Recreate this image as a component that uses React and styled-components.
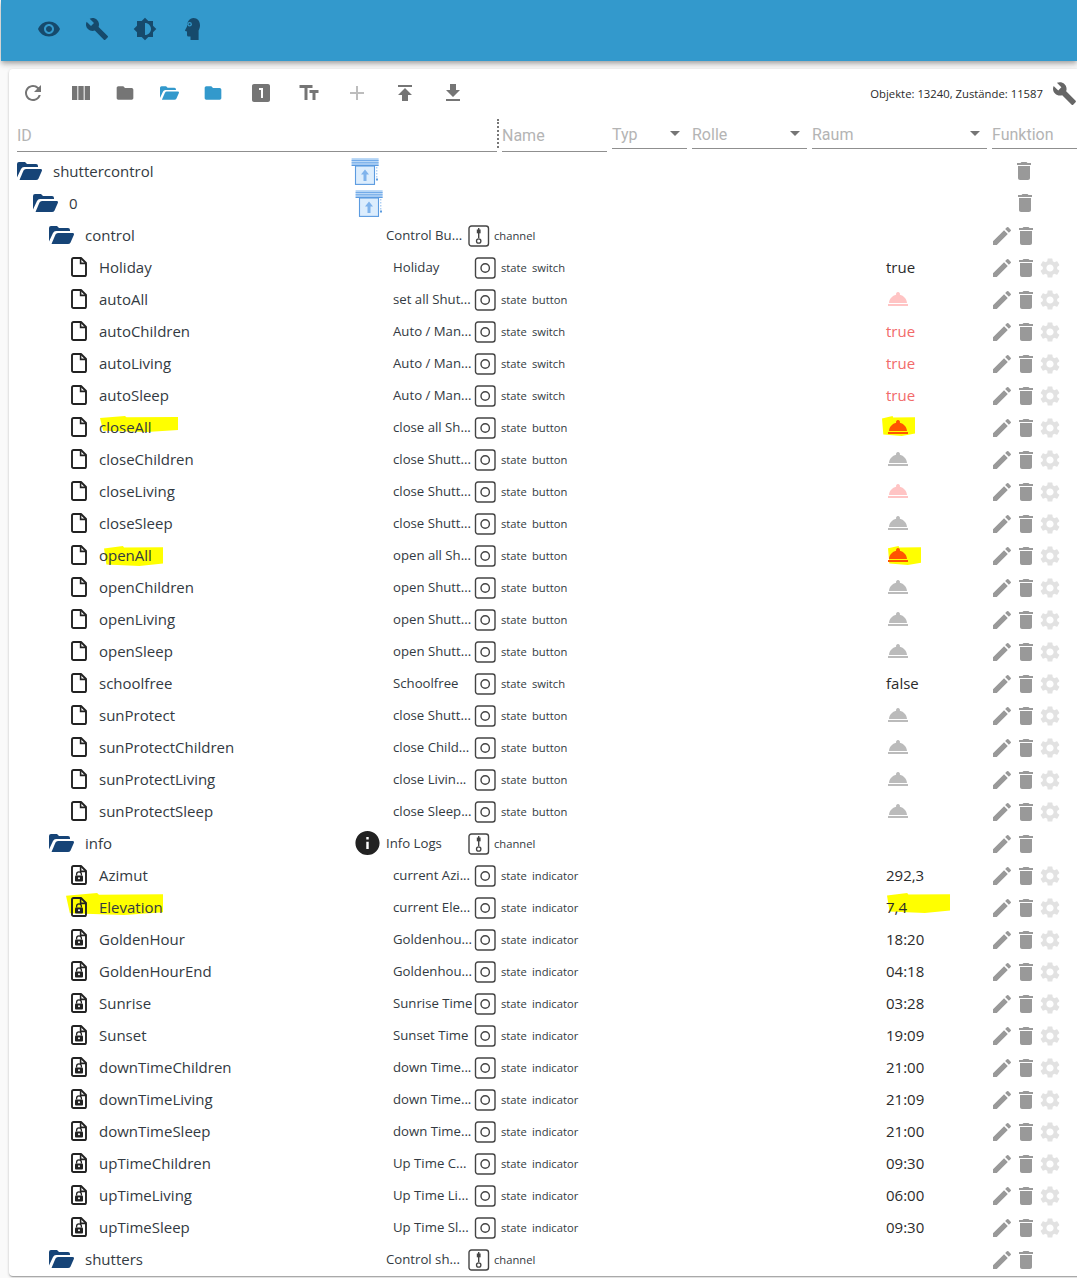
import React from 'react';
import styled, { createGlobalStyle } from 'styled-components';
import {
  MdRefresh, MdViewColumn, MdFolder, MdLooksOne, MdTextFields, MdAdd, MdPublish, MdGetApp,
  MdBuild, MdVisibility, MdBrightness6, MdEdit, MdDelete, MdSettings, MdRoomService, MdInfo,
} from 'react-icons/md';

const Global = createGlobalStyle`
  html, body { margin: 0; padding: 0; background: #fafafa; overflow: hidden; }
  body { width: 1077px; height: 1278px; font-family: "Open Sans", "Noto Sans", sans-serif; }
`;

const Page = styled.div`
  width: 1077px;
  height: 1278px;
  overflow: hidden;
  position: relative;
`;

const AppBar = styled.header`
  margin-left: 1px;
  height: 61px;
  background: #3399cc;
  box-shadow: 0 2px 4px -1px rgba(0,0,0,.2), 0 4px 5px 0 rgba(0,0,0,.14), 0 1px 10px 0 rgba(0,0,0,.12);
  display: flex;
  align-items: center;
  padding-left: 24px;
  padding-bottom: 3px;
  box-sizing: border-box;
  color: #164a6c;
`;

const AppIcon = styled.span`
  width: 48px;
  height: 48px;
  display: flex;
  align-items: center;
  justify-content: center;
  font-size: 24px;
`;

const Paper = styled.main`
  margin: 8px 0 0 9px;
  width: 1100px;
  height: 1207px;
  background: #fff;
  border-radius: 4px;
  box-shadow: 0 1px 3px 0 rgba(0,0,0,.2), 0 1px 1px 0 rgba(0,0,0,.14), 0 2px 1px -1px rgba(0,0,0,.12);
  overflow: hidden;
  position: relative;
`;

const Toolbar = styled.div`
  display: flex;
  align-items: center;
  height: 48px;
  width: 1068px;
  box-sizing: border-box;
`;

const ToolIcon = styled.span`
  width: ${p => p.$w || 48}px;
  height: 48px;
  flex: none;
  margin-left: ${p => p.$ml || 0}px;
  display: flex;
  align-items: center;
  justify-content: center;
  font-size: ${p => p.$size || 24}px;
  color: ${p => p.$color || '#757575'};
`;

const ToolGroup = styled.div`
  display: flex;
`;

const Stats = styled.div`
  margin-left: auto;
  font-size: 11.3px;
  color: #2a2a2a;
  white-space: nowrap;
`;

const WrenchSlot = styled.span`
  width: 34px;
  flex: none;
  display: flex;
  justify-content: flex-end;
  font-size: 25px;
  color: #666;
`;

const FilterBar = styled.div`
  display: flex;
  padding-left: 8px;
  height: 38px;
  box-sizing: border-box;
  margin-top: 2px;
  font-family: Roboto, sans-serif;
`;

const Filter = styled.div`
  width: ${p => p.$w}px;
  height: ${p => p.$h}px;
  flex: none;
  margin-right: ${p => p.$mr ?? 5}px;
  border-bottom: 1px solid #8f8f8f;
  box-sizing: border-box;
  display: flex;
  align-items: center;
  justify-content: space-between;
  color: #b4b4b4;
  font-size: 16px;
  padding-top: ${p => p.$pt || 0}px;
`;

const Arrow = styled.i`
  width: 0;
  height: 0;
  border-left: 5px solid transparent;
  border-right: 5px solid transparent;
  border-top: 5px solid #757575;
  margin: 0 7px 2px 0;
`;

const Resizer = styled.div`
  width: 0;
  height: 29px;
  flex: none;
  margin-right: 3px;
  border-left: 2px dotted #777;
`;

const Rows = styled.div`
  display: flex;
  flex-direction: column;
  margin-top: -2px;
`;

const PAD = [8, 24, 40, 62];
const IDW = [334, 322, 337, 321];
const TYPEW = [453, 449, 418, 412];
const VALW = [102, 103, 104, 104];

const Row = styled.div`
  display: flex;
  align-items: center;
  height: 32px;
  flex: none;
  padding-left: ${p => PAD[p.$level]}px;
  position: relative;
  color: #333a42;
`;

const IdCell = styled.div`
  width: ${p => IDW[p.$level]}px;
  flex: none;
  display: flex;
  align-items: center;
  font-size: 15px;
  position: relative;
  z-index: 1;
`;

const IdIcon = styled.span`
  width: ${p => p.$w}px;
  flex: none;
  display: flex;
  align-items: center;
`;

const NameCell = styled.div`
  width: 82px;
  flex: none;
  font-size: 13.2px;
  white-space: nowrap;
  padding-bottom: 1px;
  padding-left: ${p => p.$level === 3 ? 1 : 0}px;
  box-sizing: border-box;
  display: flex;
`;

const TypeCell = styled.div`
  width: ${p => TYPEW[p.$level]}px;
  flex: none;
  display: flex;
  align-items: center;
  font-size: 11.2px;
  white-space: nowrap;
  padding-top: 2px;
  box-sizing: border-box;
`;

const TypeName = styled.span`
  margin-left: ${p => p.$ml}px;
  width: ${p => p.$w ? p.$w + 'px' : 'auto'};
  margin-top: -2px;
`;

const ValueCell = styled.div`
  width: ${p => VALW[p.$level]}px;
  flex: none;
  font-size: 15px;
  color: ${p => p.$color || '#2b2b2b'};
  display: flex;
  align-items: center;
  position: relative;
  z-index: 1;
`;

const Actions = styled.div`
  display: flex;
  flex: none;
  padding-top: ${p => p.$level < 2 ? 0 : 2}px;
`;

const ActionIcon = styled.span`
  width: 24px;
  height: 24px;
  display: flex;
  font-size: 24px;
  color: ${p => p.$color || '#999'};
  visibility: ${p => p.$hidden ? 'hidden' : 'visible'};
`;

const Marker = styled.span`
  position: absolute;
  left: ${p => p.$x}px;
  top: ${p => p.$y}px;
  width: ${p => p.$w}px;
  height: ${p => p.$h}px;
  background: #ffff00;
  clip-path: polygon(0 12%, 32% 0, 34% 8%, 100% 6%, 100% 88%, 60% 100%, 4% 92%);
`;

const FolderOpenIcon = ({ w = 25, h = 18, color = '#164477' }) => (
  <svg width={w} height={h} viewBox="0 0 25 18" fill={color}>
    <path d="M0 15.5V2Q0 0 2 0H8L10 2H19Q21 2 21 4V5H7Q5 5 4 7Z" />
    <path d="M2.5 18L6.5 8.6Q7.2 7 9 7H23.5Q25.5 7 24.8 9L21.5 16.5Q20.8 18 19 18Z" />
  </svg>
);

const FileIcon = ({ locked }) => (
  <svg width="16" height="20" viewBox="0 0 16 20">
    <path d="M2.6 1H10L15 6V17.4Q15 19 13.4 19H2.6Q1 19 1 17.4V2.6Q1 1 2.6 1Z" fill="none" stroke="#222" strokeWidth="1.9" strokeLinejoin="round" />
    <path d="M9.6 1V6.4H15" fill="none" stroke="#222" strokeWidth="1.6" />
    {locked && (
      <g>
        <rect x="4" y="10.4" width="8" height="6" rx="1" fill="#222" />
        <path d="M5.6 10.6V9.2A2.4 2.4 0 0 1 10.4 9.2V10.6" fill="none" stroke="#222" strokeWidth="1.3" />
        <circle cx="8" cy="13.3" r="1" fill="#fff" />
      </g>
    )}
  </svg>
);

const StateIcon = () => (
  <svg width="22" height="22" viewBox="0 0 22 22">
    <rect x="1.5" y="1" width="19.5" height="20" rx="2.5" fill="none" stroke="#444" strokeWidth="1.4" />
    <circle cx="11.2" cy="11" r="4.2" fill="none" stroke="#444" strokeWidth="1.4" />
  </svg>
);

const ChannelIcon = () => (
  <svg width="22" height="22" viewBox="0 0 22 22">
    <rect x="1" y="1" width="19.5" height="20" rx="2.5" fill="none" stroke="#444" strokeWidth="1.4" />
    <path d="M10.7 3V13" stroke="#444" strokeWidth="1.4" />
    <rect x="8.8" y="4.5" width="3.8" height="3.8" fill="#444" />
    <circle cx="10.7" cy="16" r="2.2" fill="none" stroke="#444" strokeWidth="1.3" />
  </svg>
);

const ShutterIcon = () => (
  <svg width="28" height="28" viewBox="0 0 28 28">
    <rect x="4.5" y="9" width="19" height="18.4" fill="#dcedfd" stroke="#5b9be0" strokeWidth="1.1" />
    <rect x="0.6" y="1" width="27" height="7.6" fill="#bcd9f7" />
    <path d="M0.6 3.4H27.6M0.6 5.8H27.6" stroke="#6aa5e6" strokeWidth="1" />
    <path d="M0.6 8.4H27.6" stroke="#5b9be0" strokeWidth="1.2" />
    <path d="M14 12.5L18 17.5H15.5V24H12.5V17.5H10Z" fill="#7fb3ec" />
    <path d="M25.8 10V21" stroke="#8dbcf0" strokeWidth="1" strokeDasharray="1.5 1.5" />
    <rect x="25" y="21.5" width="2" height="2" fill="#5b9be0" />
  </svg>
);

const HeadIcon = () => (
  <svg width="24" height="24" viewBox="0 0 24 24">
    <path d="M12.5 1C16.5 1 19 4.2 19 8.2C19 10.6 18.2 12.2 17.6 13.6V23H9.5V19.5H7.6Q6 19.5 6 17.9V14.6L4.3 14Q3.8 13.6 4.2 13L6 9.6C6 4.8 8.5 1 12.5 1Z" fill="#164a6c" />
    <circle cx="8.6" cy="7.2" r="2.3" fill="#3399cc" />
    <circle cx="8.6" cy="7.2" r="1" fill="#164a6c" />
  </svg>
);

const BELL = { pink: '#ffc4c4', gray: '#bbbbbb', hot: '#ff5500' };

const ctl = (id, name, role, value, color) => ({ id, name, role, value, color, level: 3 });
const inf = (id, name, value) => ({ id, name, role: 'indicator', value, level: 3, locked: true });
const bell = tone => ({ bell: tone });

const rows = [
  { level: 0, id: 'shuttercontrol', folder: true, shutter: true },
  { level: 1, id: '0', folder: true, shutter: true },
  { level: 2, id: 'control', folder: true, name: 'Control Bu...' },
  ctl('Holiday', 'Holiday', 'switch', 'true'),
  ctl('autoAll', 'set all Shut...', 'button', bell('pink')),
  ctl('autoChildren', 'Auto / Man...', 'switch', 'true', '#f26a6a'),
  ctl('autoLiving', 'Auto / Man...', 'switch', 'true', '#f26a6a'),
  ctl('autoSleep', 'Auto / Man...', 'switch', 'true', '#f26a6a'),
  { ...ctl('closeAll', 'close all Sh...', 'button', bell('hot')), marks: [[91, 5, 78, 16], [873, 5, 33, 20]] },
  ctl('closeChildren', 'close Shutt...', 'button', bell('gray')),
  ctl('closeLiving', 'close Shutt...', 'button', bell('pink')),
  ctl('closeSleep', 'close Shutt...', 'button', bell('gray')),
  { ...ctl('openAll', 'open all Sh...', 'button', bell('hot')), marks: [[95, 7, 59, 20], [879, 7, 33, 19]] },
  ctl('openChildren', 'open Shutt...', 'button', bell('gray')),
  ctl('openLiving', 'open Shutt...', 'button', bell('gray')),
  ctl('openSleep', 'open Shutt...', 'button', bell('gray')),
  ctl('schoolfree', 'Schoolfree', 'switch', 'false'),
  ctl('sunProtect', 'close Shutt...', 'button', bell('gray')),
  ctl('sunProtectChildren', 'close Child...', 'button', bell('gray')),
  ctl('sunProtectLiving', 'close Livin...', 'button', bell('gray')),
  ctl('sunProtectSleep', 'close Sleep...', 'button', bell('gray')),
  { level: 2, id: 'info', folder: true, name: 'Info Logs', info: true },
  inf('Azimut', 'current Azi...', '292,3'),
  { ...inf('Elevation', 'current Ele...', '7,4'), marks: [[57, 2, 97, 22], [878, 2, 63, 20]] },
  inf('GoldenHour', 'Goldenhou...', '18:20'),
  inf('GoldenHourEnd', 'Goldenhou...', '04:18'),
  inf('Sunrise', 'Sunrise Time', '03:28'),
  inf('Sunset', 'Sunset Time', '19:09'),
  inf('downTimeChildren', 'down Time...', '21:00'),
  inf('downTimeLiving', 'down Time...', '21:09'),
  inf('downTimeSleep', 'down Time...', '21:00'),
  inf('upTimeChildren', 'Up Time C...', '09:30'),
  inf('upTimeLiving', 'Up Time Li...', '06:00'),
  inf('upTimeSleep', 'Up Time Sl...', '09:30'),
  { level: 2, id: 'shutters', folder: true, name: 'Control sh...' },
];

const InfoMark = styled.span`
  position: absolute;
  left: -33px;
  top: 50%;
  transform: translateY(-50%);
  display: flex;
  font-size: 29px;
  color: #222;
`;

const NameWrap = styled.div`
  position: relative;
  display: flex;
`;

const TreeRow = ({ r }) => (
  <Row $level={r.level}>
    {r.marks && r.marks.map((m, i) => (
      <Marker key={i} $x={m[0]} $y={m[1]} $w={m[2]} $h={m[3]} />
    ))}
    <IdCell $level={r.level}>
      {r.folder ? (
        <IdIcon $w={36}><FolderOpenIcon /></IdIcon>
      ) : (
        <IdIcon $w={28}><FileIcon locked={r.locked} /></IdIcon>
      )}
      <span>{r.id}</span>
    </IdCell>
    <NameWrap>
      {r.info && <InfoMark><MdInfo /></InfoMark>}
      <NameCell $level={r.level}>{r.shutter ? <ShutterIcon /> : r.name}</NameCell>
    </NameWrap>
    <TypeCell $level={r.level}>
      {r.level === 2 && (<><ChannelIcon /><TypeName $ml={4}>channel</TypeName></>)}
      {r.level === 3 && (
        <>
          <StateIcon />
          <TypeName $ml={5} $w={31}>state</TypeName>
          <TypeName $ml={0}>{r.role}</TypeName>
        </>
      )}
    </TypeCell>
    <ValueCell $level={r.level} $color={r.color}>
      {r.value && r.value.bell ? (
        <ActionIcon $color={BELL[r.value.bell]}><MdRoomService /></ActionIcon>
      ) : r.value}
    </ValueCell>
    <Actions $level={r.level}>
      <ActionIcon $hidden={r.level < 2}><MdEdit /></ActionIcon>
      <ActionIcon><MdDelete /></ActionIcon>
      {r.level === 3 && <ActionIcon $color="#e2e2e2"><MdSettings /></ActionIcon>}
    </Actions>
  </Row>
);

export default function App() {
  return (
    <Page>
      <Global />
      <AppBar>
        <AppIcon><MdVisibility /></AppIcon>
        <AppIcon><MdBuild /></AppIcon>
        <AppIcon><MdBrightness6 /></AppIcon>
        <AppIcon><HeadIcon /></AppIcon>
      </AppBar>
      <Paper>
        <Toolbar>
          <ToolGroup>
            <ToolIcon><MdRefresh /></ToolIcon>
            <ToolIcon><MdViewColumn /></ToolIcon>
            <ToolIcon $w={44} $ml={-2} $size={20}><MdFolder /></ToolIcon>
            <ToolIcon $w={44}><FolderOpenIcon w={19} h={14} color="#3399cc" /></ToolIcon>
            <ToolIcon $w={44} $size={20} $color="#3399cc"><MdFolder /></ToolIcon>
            <ToolIcon $w={52}><MdLooksOne /></ToolIcon>
            <ToolIcon $ml={-2}><MdTextFields /></ToolIcon>
            <ToolIcon $color="#bdbdbd"><MdAdd /></ToolIcon>
            <ToolIcon><MdPublish /></ToolIcon>
            <ToolIcon><MdGetApp /></ToolIcon>
          </ToolGroup>
          <Stats>Objekte: 13240, Zustände: 11587</Stats>
          <WrenchSlot><MdBuild /></WrenchSlot>
        </Toolbar>
        <FilterBar>
          <Filter $w={480} $h={33} $mr={0}>ID</Filter>
          <Resizer />
          <Filter $w={105} $h={33}>Name</Filter>
          <Filter $w={75} $h={30} $pt={2}>Typ<Arrow /></Filter>
          <Filter $w={115} $h={30} $pt={2}>Rolle<Arrow /></Filter>
          <Filter $w={175} $h={30} $pt={2}>Raum<Arrow /></Filter>
          <Filter $w={85} $h={30} $pt={2}>Funktion</Filter>
        </FilterBar>
        <Rows>
          {rows.map(r => <TreeRow key={r.id} r={r} />)}
        </Rows>
      </Paper>
    </Page>
  );
}
